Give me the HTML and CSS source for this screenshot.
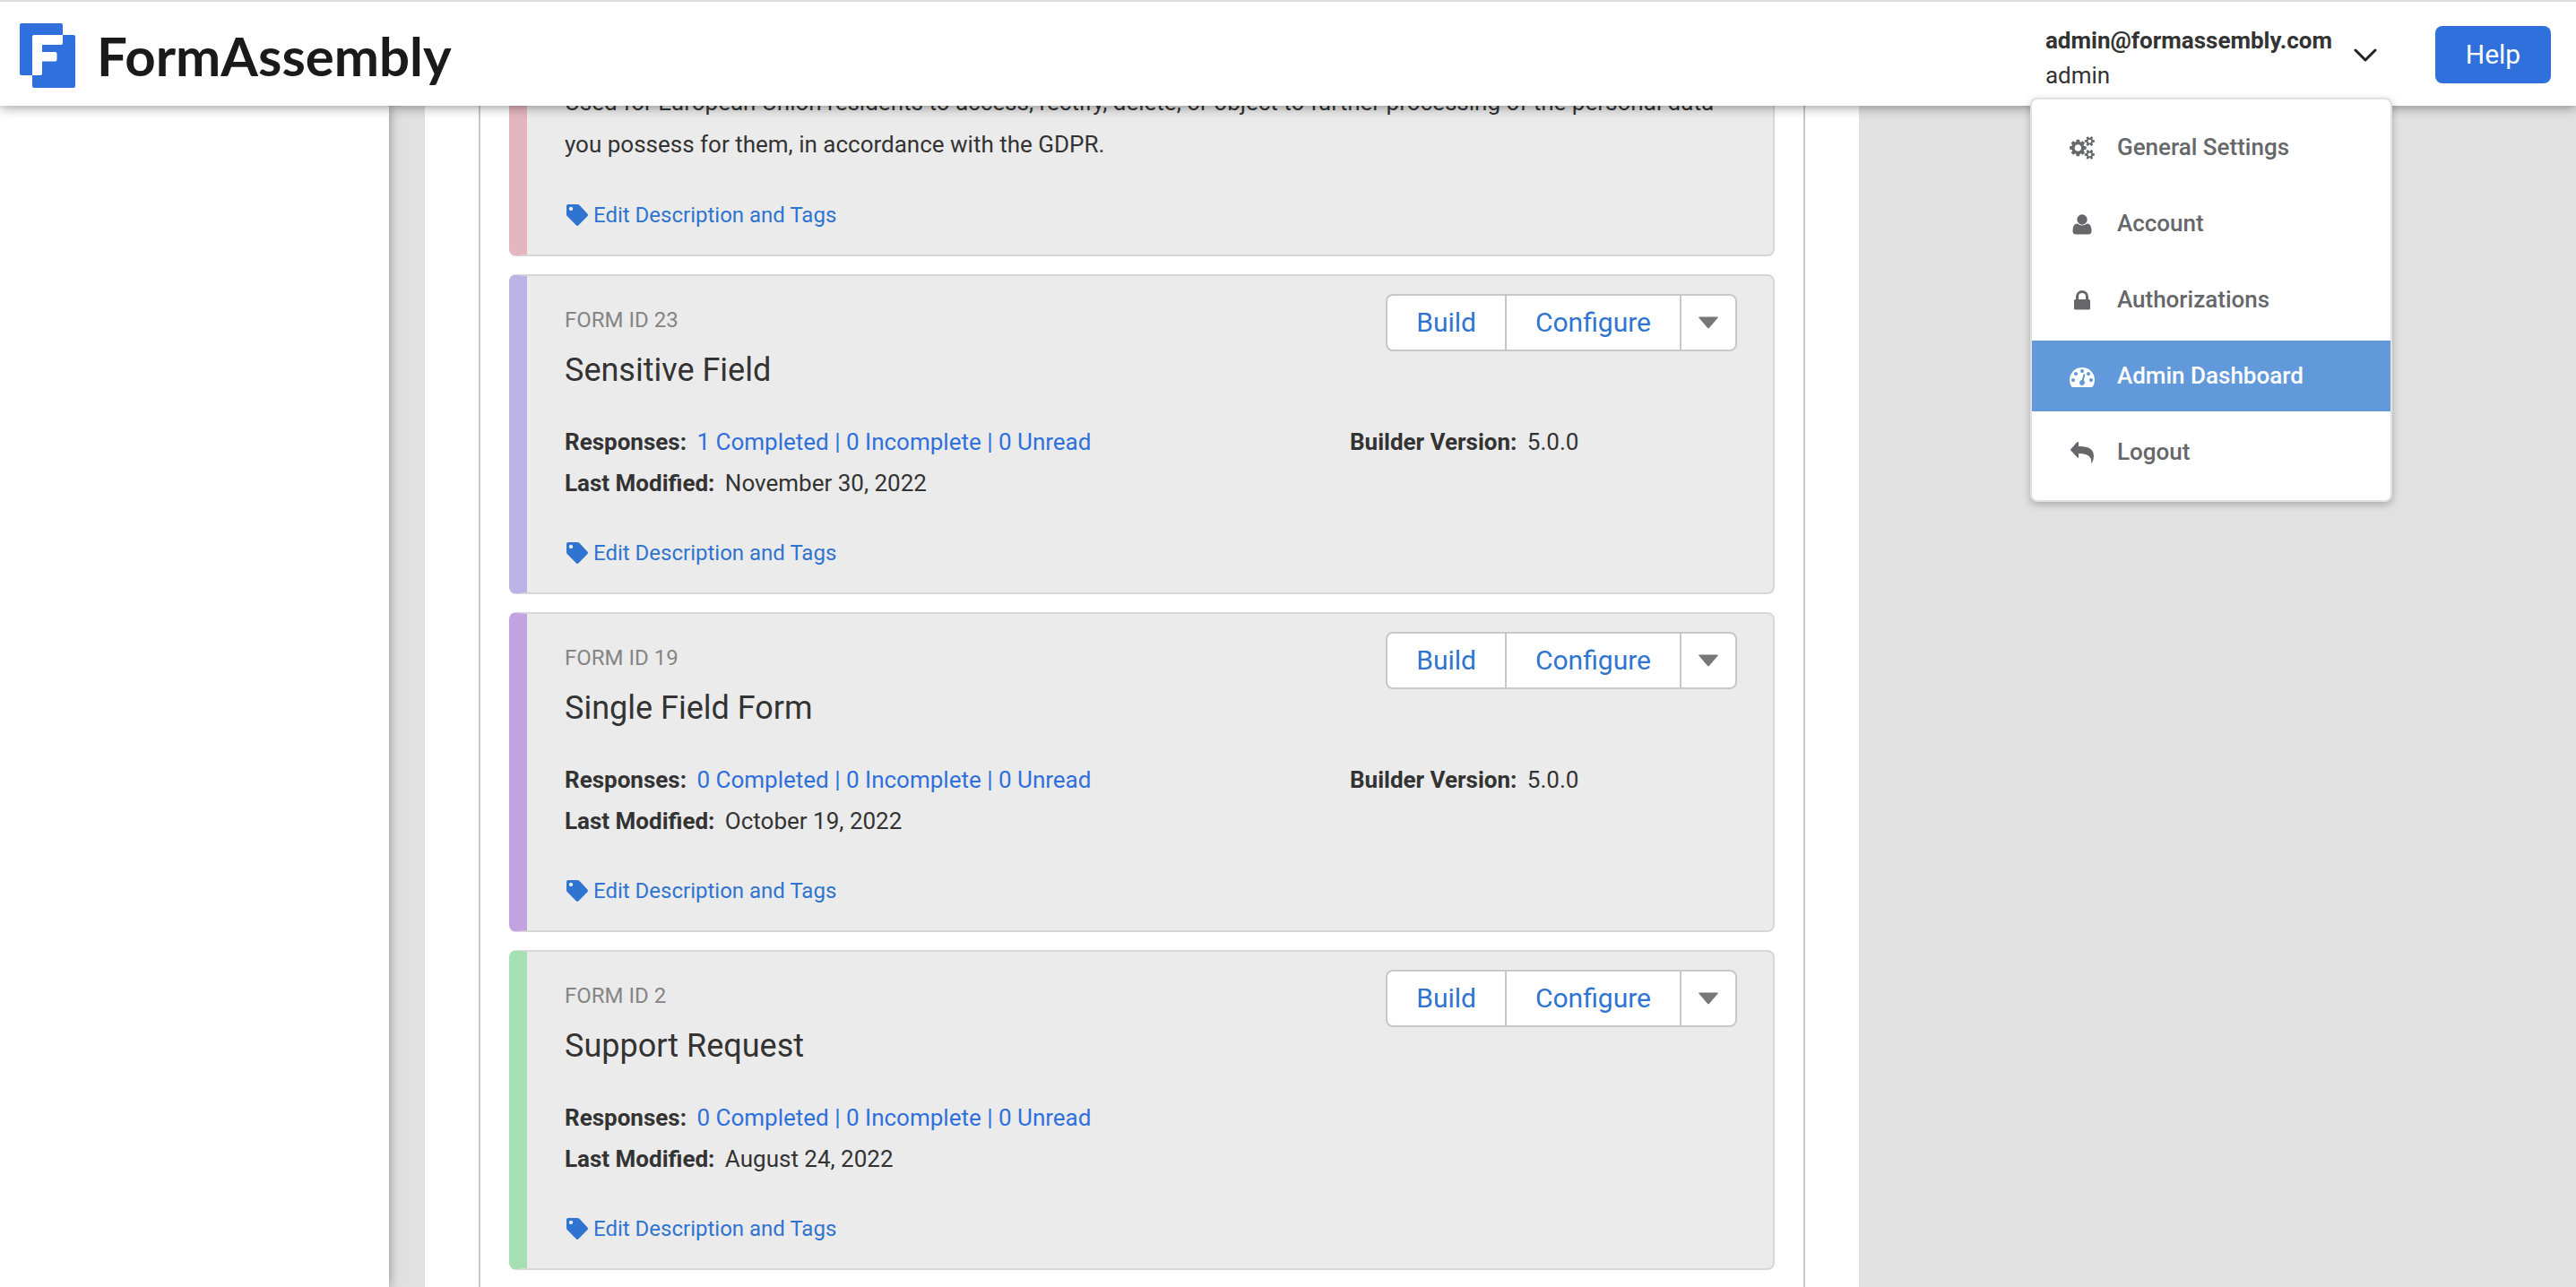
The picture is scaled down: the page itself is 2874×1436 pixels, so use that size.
FILE: index.html
```html
<!DOCTYPE html>
<html lang="en">
<head>
<meta charset="utf-8">
<title>FormAssembly - Forms</title>
<link rel="stylesheet" href="styles.css">
</head>
<body>
<svg class="sprite" aria-hidden="true">
  <symbol id="tag" viewBox="0 0 24 24"><path fill-rule="evenodd" d="M2 0h10q1.500 0 2.600 1.100l8.800 9.400q1.200 1.300 0 2.700l-9.900 10.100q-1.300 1.300-2.700 0l-9.700-9.700q-1.100-1.100-1.100-2.600v-9q0-2 2-2zM5 2.800a2.200 2.200 0 1 0 .01 0z"/></symbol>
  <symbol id="cogs" viewBox="0 0 1920 1792"><path d="M896 896q0-106-75-181t-181-75-181 75-75 181 75 181 181 75 181-75 75-181zm768 512q0-52-38-90t-90-38-90 38-38 90q0 53 37.500 90.500t90.500 37.500 90.500-37.500 37.500-90.500zm0-1024q0-52-38-90t-90-38-90 38-38 90q0 53 37.500 90.500t90.500 37.500 90.500-37.500 37.500-90.500zm-384 421v185q0 10-7 19.500t-16 10.500l-155 24q-11 35-32 76 34 48 90 115 7 11 7 20 0 12-7 19-23 30-82.500 89.500t-78.500 59.500q-11 0-21-7l-115-90q-37 19-77 31-11 108-23 155-7 24-30 24h-186q-11 0-20-7.500t-10-17.500l-23-153q-34-10-75-31l-118 89q-7 7-20 7-11 0-21-8-144-133-144-160 0-9 7-19 10-14 41-53t47-61q-23-44-35-82l-152-24q-10-1-17-9.500t-7-19.500v-185q0-10 7-19.500t16-10.500l155-24q11-35 32-76-34-48-90-115-7-11-7-20 0-12 7-20 22-30 82-89t79-59q11 0 21 7l115 90q34-18 77-32 11-108 23-154 7-24 30-24h186q11 0 20 7.500t10 17.500l23 153q34 10 75 31l118-89q8-7 20-7 11 0 21 8 144 133 144 160 0 8-7 19-12 16-42 54t-45 60q23 48 34 82l152 23q10 2 17 10.500t7 19.500zm640 533v140q0 16-149 31-12 27-30 52 51 113 51 138 0 4-4 7-122 71-124 71-8 0-46-47t-52-68q-20 2-30 2t-30-2q-14 21-52 68t-46 47q-2 0-124-71-4-3-4-7 0-25 51-138-18-25-30-52-149-15-149-31v-140q0-16 149-31 13-29 30-52-51-113-51-138 0-4 4-7 4-2 35-20t59-34 30-16q8 0 46 46.500t52 67.500q20-2 30-2t30 2q51-71 92-112l6-2q4 0 124 70 4 3 4 7 0 25-51 138 17 23 30 52 149 15 149 31zm0-1024v140q0 16-149 31-12 27-30 52 51 113 51 138 0 4-4 7-122 71-124 71-8 0-46-47t-52-68q-20 2-30 2t-30-2q-14 21-52 68t-46 47q-2 0-124-71-4-3-4-7 0-25 51-138-18-25-30-52-149-15-149-31v-140q0-16 149-31 13-29 30-52-51-113-51-138 0-4 4-7 4-2 35-20t59-34 30-16q8 0 46 46.500t52 67.500q20-2 30-2t30 2q51-71 92-112l6-2q4 0 124 70 4 3 4 7 0 25-51 138 17 23 30 52 149 15 149 31z"/></symbol>
  <symbol id="user" viewBox="0 0 21 24"><circle cx="10.500" cy="7" r="5.700"/><path d="M5 11.500q5.500 4 11 0q5 .5 5 8q0 4-3.500 4h-14q-3.500 0-3.500-4q0-7.500 5-8z"/></symbol>
  <symbol id="lock" viewBox="0 -1 18 24"><path fill-rule="evenodd" d="M2 10V7a7 7 0 0 1 14 0v3h.5q1.500 0 1.500 1.500v8.500q0 1.500-1.500 1.500h-15q-1.500 0-1.500-1.500v-8.500q0-1.500 1.500-1.500zM5 10h8V7a4 4 0 0 0-8 0z"/></symbol>
  <symbol id="gauge" viewBox="0 128 1792 1536"><path d="M384 1152q0-53-37.500-90.500t-90.500-37.500-90.500 37.500-37.500 90.500 37.500 90.500 90.500 37.500 90.500-37.500 37.500-90.500zm192-448q0-53-37.500-90.500t-90.500-37.500-90.500 37.500-37.500 90.500 37.500 90.500 90.500 37.500 90.500-37.500 37.500-90.500zm428 481l101-382q6-26-7.500-48.500t-38.500-29.500-48 6.500-30 39.500l-101 382q-60 5-107 43.500t-63 98.500q-20 77 20 146t117 89 146-20 89-117q16-60-6-117t-72-91zm660-33q0-53-37.500-90.500t-90.500-37.500-90.500 37.500-37.500 90.500 37.500 90.500 90.500 37.500 90.500-37.500 37.500-90.500zm-640-640q0-53-37.500-90.500t-90.500-37.500-90.500 37.500-37.500 90.500 37.500 90.500 90.500 37.500 90.500-37.500 37.500-90.500zm448 192q0-53-37.500-90.500t-90.500-37.500-90.500 37.500-37.500 90.500 37.500 90.500 90.500 37.500 90.500-37.500 37.500-90.500zm320 448q0 261-141 483-19 29-54 29h-1402q-35 0-54-29-141-221-141-483 0-182 71-348t191-286 286-191 348-71 348 71 286 191 191 286 71 348z"/></symbol>
  <symbol id="back" viewBox="0 0 26 24"><path d="M8 0q1 0 1 1v4q17-.5 17 11q0 3.500-2 7.500q-.4.700-.8 0q1-10.500-14.200-10.500v4q0 1.500-1.200.6l-7.500-8q-.6-.6 0-1.300l7-8z"/></symbol>
</svg>

<header class="topbar">
  <a class="brand" href="#">
    <svg class="brand-mark" viewBox="0 0 62 72" aria-hidden="true">
      <path fill="#2f70dd" d="M2 0h44q2 0 2 2v11h12q2 0 2 2v55q0 2-2 2H16q-2 0-2-2V58H2q-2 0-2-2V2q0-2 2-2z"/>
      <path fill="#fff" d="M16 13h32v9q0 2-2 2H25v8h14.500q2 0 2 2v6.500q0 2-2 2H25V56q0 2-2 2h-9V15q0-2 2-2z"/>
    </svg>
    <span class="brand-name">FormAssembly</span>
  </a>
  <div class="account">
    <button class="account-toggle" type="button" aria-expanded="true">
      <span class="account-text"><strong>admin@formassembly.com</strong><span>admin</span></span>
      <svg class="chevron" viewBox="0 0 26 16" aria-hidden="true"><path d="M2 2l11 11L24 2"/></svg>
    </button>
    <nav class="menu" aria-label="Account">
      <a href="#"><svg class="ico cogs"><use href="#cogs"/></svg>General Settings</a>
      <a href="#"><svg class="ico"><use href="#user"/></svg>Account</a>
      <a href="#"><svg class="ico"><use href="#lock"/></svg>Authorizations</a>
      <a class="active" href="#"><svg class="ico"><use href="#gauge"/></svg>Admin Dashboard</a>
      <a href="#"><svg class="ico"><use href="#back"/></svg>Logout</a>
    </nav>
  </div>
  <button class="help" type="button">Help</button>
</header>

<div class="layout">
  <aside class="sidebar"></aside>
  <main class="panel">
    <div class="forms">
      <article class="card pink">
        <p class="description">Used for European Union residents to access, rectify, delete, or object to further processing of the personal data you possess for them, in accordance with the GDPR.</p>
        <a class="edit" href="#"><svg><use href="#tag"/></svg>Edit Description and Tags</a>
      </article>

      <article class="card violet">
        <div class="card-head">
          <div><p class="form-id">FORM ID 23</p><h2>Sensitive Field</h2></div>
          <div class="actions"><button type="button">Build</button><button type="button">Configure</button><button class="more" type="button" aria-label="More actions"><svg viewBox="0 0 22 13"><path d="M1 0h20q1.500 0 .5 1.200l-9.500 11q-1 1-2 0l-9.500-11q-1-1.200.5-1.200z"/></svg></button></div>
        </div>
        <div class="facts">
          <div><p><strong>Responses:</strong> <a href="#">1 Completed | 0 Incomplete | 0 Unread</a></p><p><strong>Last Modified:</strong> November 30, 2022</p></div>
          <p><strong>Builder Version:</strong> 5.0.0</p>
        </div>
        <a class="edit" href="#"><svg><use href="#tag"/></svg>Edit Description and Tags</a>
      </article>

      <article class="card purple">
        <div class="card-head">
          <div><p class="form-id">FORM ID 19</p><h2>Single Field Form</h2></div>
          <div class="actions"><button type="button">Build</button><button type="button">Configure</button><button class="more" type="button" aria-label="More actions"><svg viewBox="0 0 22 13"><path d="M1 0h20q1.500 0 .5 1.200l-9.500 11q-1 1-2 0l-9.500-11q-1-1.200.5-1.200z"/></svg></button></div>
        </div>
        <div class="facts">
          <div><p><strong>Responses:</strong> <a href="#">0 Completed | 0 Incomplete | 0 Unread</a></p><p><strong>Last Modified:</strong> October 19, 2022</p></div>
          <p><strong>Builder Version:</strong> 5.0.0</p>
        </div>
        <a class="edit" href="#"><svg><use href="#tag"/></svg>Edit Description and Tags</a>
      </article>

      <article class="card green">
        <div class="card-head">
          <div><p class="form-id">FORM ID 2</p><h2>Support Request</h2></div>
          <div class="actions"><button type="button">Build</button><button type="button">Configure</button><button class="more" type="button" aria-label="More actions"><svg viewBox="0 0 22 13"><path d="M1 0h20q1.500 0 .5 1.200l-9.500 11q-1 1-2 0l-9.500-11q-1-1.200.5-1.200z"/></svg></button></div>
        </div>
        <div class="facts">
          <div><p><strong>Responses:</strong> <a href="#">0 Completed | 0 Incomplete | 0 Unread</a></p><p><strong>Last Modified:</strong> August 24, 2022</p></div>
        </div>
        <a class="edit" href="#"><svg><use href="#tag"/></svg>Edit Description and Tags</a>
      </article>
    </div>
  </main>
</div>
</body>
</html>
```
FILE: styles.css
```css
* { box-sizing: border-box; }
html, body { height: 100%; }
body {
  margin: 0;
  display: flex;
  flex-direction: column;
  overflow: hidden;
  background: #e1e1e1;
  color: #333;
  font: 26px/46px Roboto, "Liberation Sans", sans-serif;
}
p, h2 { margin: 0; }
a { color: #2f70dd; text-decoration: none; }
button { font: inherit; cursor: pointer; }
strong { font-weight: 700; }
.sprite { position: absolute; width: 0; height: 0; }

/* Top bar */
.topbar {
  position: relative;
  z-index: 2;
  flex: none;
  display: flex;
  align-items: center;
  height: 118px;
  padding: 2px 28px 0 22px;
  background: #fff;
  border-top: 2px solid #dedede;
  box-shadow: 0 2px 12px rgba(0, 0, 0, .4);
}
.brand { display: flex; align-items: center; gap: 24px; margin-right: auto; padding-top: 2px; color: #1a1a1a; }
.brand-mark { width: 62px; height: 72px; }
.brand-name { font: 700 60px/72px Lato, sans-serif; }
.account { position: relative; margin-right: 65px; }
.account-toggle {
  display: flex;
  align-items: center;
  gap: 24px;
  padding: 0;
  border: 0;
  background: none;
  color: #333;
  text-align: left;
  line-height: 39px;
}
.account-text { display: flex; flex-direction: column; padding-top: 8px; }
.chevron { width: 26px; height: 16px; margin-top: 2px; fill: none; stroke: #222; stroke-width: 3; stroke-linecap: round; stroke-linejoin: round; }
.help {
  width: 129px;
  height: 64px;
  border: 0;
  border-radius: 8px;
  background: #2f70dd;
  color: #fff;
  font-size: 30px;
}

/* Account menu */
.menu {
  position: absolute;
  top: 91px;
  left: -17px;
  width: 404px;
  display: flex;
  flex-direction: column;
  gap: 6px;
  padding: 14px 0;
  background: #fff;
  border: 2px solid #e1e1e1;
  border-radius: 8px;
  box-shadow: 0 3px 8px rgba(0, 0, 0, .25);
}
.menu a {
  display: flex;
  align-items: center;
  gap: 25px;
  height: 79px;
  padding: 0 42px 2px;
  color: #66676b;
  font-weight: 500;
}
.menu .active { background: #6299db; color: #fff; }
.ico { width: 28px; height: 24px; margin-top: 2px; fill: currentColor; }
.ico.cogs { height: 26px; }

/* Page */
.layout { flex: 1; min-height: 0; display: flex; gap: 40px; }
.sidebar { flex: none; width: 434px; background: #fff; box-shadow: 0 0 12px rgba(0, 0, 0, .4); }
.panel { flex: none; width: 1600px; padding: 0 60px; background: #fff; }
.forms {
  display: flex;
  flex-direction: column;
  gap: 20px;
  height: 100%;
  padding: 0 32px;
  border: solid #c8c8c8;
  border-width: 0 2px;
}
.card {
  flex: none;
  padding: 20px 40px 21px 42px;
  background: #ebebeb;
  border: 2px solid #d7d7d7;
  border-left-width: 20px;
  border-radius: 8px;
}
.pink { margin-top: -49px; border-left-color: #e4b6c0; }
.violet { border-left-color: #bab4e6; }
.purple { border-left-color: #c3a2e1; }
.green { border-left-color: #a7dfb4; }
.card-head { display: flex; justify-content: space-between; }
.form-id { color: #858585; font-size: 24px; line-height: 58px; }
h2 { font-size: 36px; font-weight: 400; line-height: 54px; }
.actions { display: flex; height: 64px; background: #fff; border: 2px solid #c8c8c8; border-radius: 8px; }
.actions button { padding: 0 32px; border: 0; background: none; color: #2f74d0; font-size: 30px; }
.actions button + button { border-left: 2px solid #c8c8c8; }
.actions .more { display: flex; align-items: center; padding: 0 19px; }
.more svg { width: 22px; height: 14px; fill: #777; }
.facts { display: grid; grid-template-columns: 876px 1fr; margin: 30px 0 32px; }
.facts strong { margin-right: 5px; }
.edit { display: flex; align-items: center; gap: 6px; padding-left: 2px; color: #2f74d0; font-size: 24px; }
.edit svg { width: 24px; height: 24px; fill: currentColor; }
.description { margin-bottom: 32px; line-height: 47px; }
```
